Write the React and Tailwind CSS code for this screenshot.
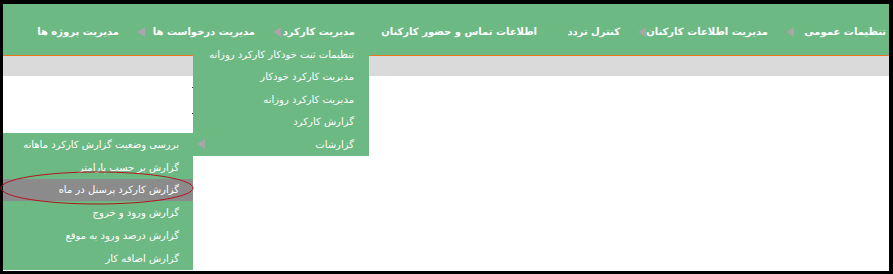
import React from 'react';

const navItems = [
  { label: 'تنظیمات عمومی', box: 'w-[118px]', arrow: true },
  { label: 'مدیریت اطلاعات کارکنان', box: 'w-[148px]', arrow: true },
  { label: 'کنترل تردد', box: 'w-[83px]', arrow: false },
  { label: 'اطلاعات تماس و حضور کارکنان', box: 'w-[182px]', arrow: false },
  { label: 'مدیریت کارکرد', box: 'w-[100px]', arrow: true },
  { label: 'مدیریت درخواست ها', box: 'w-[136px]', arrow: true },
  { label: 'مدیریت پروژه ها', box: 'w-[116px]', arrow: false },
];

const workItems = [
  'تنظیمات ثبت خودکار کارکرد روزانه',
  'مدیریت کارکرد خودکار',
  'مدیریت کارکرد روزانه',
  'گزارش کارکرد',
  'گزارشات',
];

const reportItems = [
  'بررسی وضعیت گزارش کارکرد ماهانه',
  'گزارش بر حسب پارامتر',
  'گزارش کارکرد پرسنل در ماه',
  'گزارش ورود و خروج',
  'گزارش درصد ورود به موقع',
  'گزارش اضافه کار',
];

// مثلث خاکستری منو
function Arrow() {
  return (
    <span className="w-0 h-0 shrink-0 border-y-[5px] border-y-transparent border-r-[8px] border-r-[#a6a6a6]" />
  );
}

export default function App() {
  return (
    <div className="relative w-[893px] h-[274px] bg-black pt-[4px] pl-[3px] pr-[4px] pb-[3px] font-['DejaVu_Sans',sans-serif]">
      <div className="relative w-full h-full bg-white overflow-hidden">
        {/* نوار منوی اصلی */}
        <nav dir="rtl" className="flex h-[51px] bg-[#6cb984] pr-[3px] pt-[4px] items-center">
          {navItems.map((item) => (
            <div
              key={item.label}
              className={`${item.box} shrink-0 flex items-center justify-between pl-[18px]`}
            >
              <span className="text-white font-bold text-[10px] whitespace-nowrap">{item.label}</span>
              {item.arrow && <Arrow />}
            </div>
          ))}
        </nav>
        <div className="h-px bg-[#e8791f]" />
        <div className="h-[20px] bg-[#dadada]" />

        {/* نقطه‌های کوچک */}
        <div className="absolute left-[189px] top-[83px] w-[2px] h-px bg-[#333]" />
        <div className="absolute left-[189px] top-[109px] w-[2px] h-px bg-[#333]" />

        {/* زیرمنوی مدیریت کارکرد */}
        <div dir="rtl" className="absolute left-[190px] top-[39px] w-[176px] bg-[#6cb984]">
          {workItems.map((t, i) => (
            <div key={t} className="h-[22.5px] flex items-center justify-between pr-[15px] pl-[4px]">
              <span className="text-white text-[10px] whitespace-nowrap">{t}</span>
              {i === 4 && <Arrow />}
            </div>
          ))}
        </div>

        {/* زیرمنوی گزارشات */}
        <div dir="rtl" className="absolute left-0 top-[129px] w-[190px] bg-[#6cb984]">
          {reportItems.map((t, i) => (
            <div
              key={t}
              className={`h-[22.8px] flex items-center pr-[14px] ${i === 2 ? 'bg-[#8b8b8b]' : ''}`}
            >
              <span className="text-white text-[10px] whitespace-nowrap">{t}</span>
            </div>
          ))}
        </div>
      </div>

      {/* حاشیه‌نویسی قرمز */}
      <svg className="absolute left-0 top-[171px]" width="196" height="36" viewBox="0 0 196 36">
        <ellipse cx="97" cy="17" rx="96" ry="16" fill="none" stroke="#b3141c" strokeWidth="1" />
      </svg>
    </div>
  );
}
